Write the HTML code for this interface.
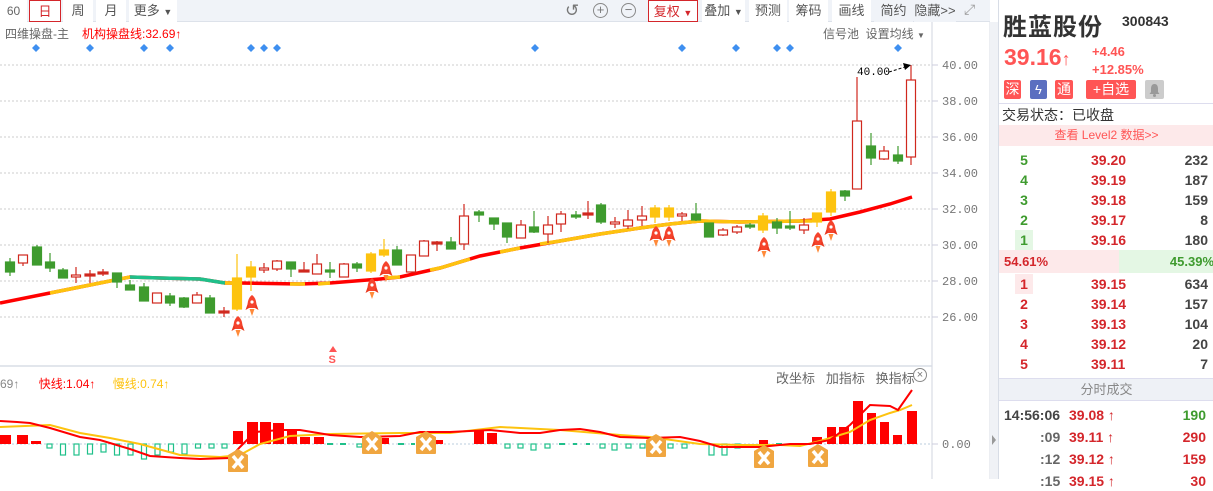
<!DOCTYPE html>
<html><head><meta charset="utf-8"><style>
*{margin:0;padding:0;box-sizing:border-box}
body{width:1213px;height:479px;overflow:hidden;background:#fff;font-family:"Liberation Sans","Noto Sans CJK SC",sans-serif;position:relative}
.a{position:absolute;white-space:nowrap}
.tb{position:absolute;left:0;top:0;width:990px;height:22px;background:#f0f3f8;border-bottom:1px solid #dde2ea}
.bt{position:absolute;top:0;height:22px;background:#fff;color:#555;font-size:13px;line-height:22px;text-align:center}
.rp{position:absolute;left:998px;top:0;width:215px;height:479px;border-left:1px solid #d8dde6}
.row{position:absolute;left:0;width:215px;height:20px;font-size:14px;font-weight:bold;line-height:20px}
.row .i{position:absolute;left:18px;width:14px;text-align:center}
.row .p{position:absolute;left:92px;color:#d4262b}
.row .v{position:absolute;right:6px;color:#444}
</style></head><body>
<div class="tb">
<div class="bt" style="left:0;width:27px;font-size:12px;color:#666">60</div>
<div class="bt" style="left:29px;width:32px;border:1px solid #d4262b;color:#d4262b">日</div>
<div class="bt" style="left:63px;width:30px">周</div>
<div class="bt" style="left:96px;width:30px">月</div>
<div class="bt" style="left:129px;width:48px">更多 <span style="font-size:9px">▼</span></div>
<div class="a" style="left:565px;top:0;font-size:17px;color:#777;line-height:22px">↺</div>
<div class="a" style="left:593px;top:3px;width:15px;height:15px;border:1.5px solid #888;border-radius:50%;font-size:13px;line-height:12px;text-align:center;color:#777">+</div>
<div class="a" style="left:621px;top:3px;width:15px;height:15px;border:1.5px solid #888;border-radius:50%;font-size:13px;line-height:11px;text-align:center;color:#777">−</div>
<div class="bt" style="left:648px;width:50px;border:1px solid #d4262b;color:#d4262b">复权 <span style="font-size:9px">▼</span></div>
<div class="bt" style="left:702px;width:43px">叠加 <span style="font-size:9px">▼</span></div>
<div class="bt" style="left:749px;width:38px">预测</div>
<div class="bt" style="left:789px;width:39px">筹码</div>
<div class="bt" style="left:832px;width:39px">画线</div>
<div class="bt" style="left:874px;width:39px;background:#f0f3f8">简约</div>
<div class="bt" style="left:914px;width:42px;background:#f0f3f8">隐藏&gt;&gt;</div>
<div class="a" style="left:964px;top:1px;font-size:14px;color:#999">⤢</div>
</div>
<div class="a" style="left:5px;top:25px;font-size:12px;color:#666">四维操盘-主</div>
<div class="a" style="left:82px;top:25px;font-size:12px;color:#f00">机构操盘线:32.69↑</div>
<div class="a" style="left:823px;top:25px;font-size:12px;color:#666">信号池&nbsp;&nbsp;设置均线 <span style="font-size:8px">▼</span></div>
<div class="a" style="left:0;top:375px;font-size:12px;color:#888">69↑ <span style="color:#f00;margin-left:16px">快线:1.04↑</span> <span style="color:#fdc30f;margin-left:14px">慢线:0.74↑</span></div>
<div class="a" style="left:776px;top:368px;font-size:13px;color:#666">改坐标&nbsp;&nbsp; 加指标&nbsp;&nbsp; 换指标</div>
<div class="a" style="left:913px;top:368px;width:14px;height:14px;border:1px solid #888;border-radius:50%;font-size:11px;line-height:12px;text-align:center;color:#777">×</div>
<svg class="a" style="left:0;top:0" width="998" height="479">
<defs>
<g id="rk"><path d="M0 0C4 3 5 8 4 13L-4 13C-5 8-4 3 0 0Z" fill="#f5432c"/><path d="M-4 8L-6.5 15L-3 13ZM4 8L6.5 15L3 13Z" fill="#e8371f"/><path d="M-2.5 14L0 21L2.5 14Z" fill="#ff8a3a"/><circle cx="0" cy="7" r="1.6" fill="#fff"/></g>
<g id="xb"><path d="M-10-6L0-12L10-6L10 10Q10 11 9 11L-9 11Q-10 11-10 10Z" fill="#f0a640"/><path d="M-5-5L5 7M5-5L-5 7" stroke="#fff" stroke-width="3.5"/></g>
</defs>
<line x1="990" y1="22" x2="990" y2="479" stroke="#d8dde6"/>
<rect x="990" y="22" width="8" height="457" fill="#f0f2f6"/>
<path d="M992 435L996 440L992 445Z" fill="#999"/>
<line x1="932" y1="22" x2="932" y2="479" stroke="#d0d6df"/>
<line x1="0" y1="366" x2="932" y2="366" stroke="#d8dde6" stroke-width="1.5"/>
<g stroke="#ccc" stroke-dasharray="2,2"><line x1="0" y1="65" x2="932" y2="65"/><line x1="0" y1="101" x2="932" y2="101"/><line x1="0" y1="137" x2="932" y2="137"/><line x1="0" y1="173" x2="932" y2="173"/><line x1="0" y1="209" x2="932" y2="209"/><line x1="0" y1="245" x2="932" y2="245"/><line x1="0" y1="281" x2="932" y2="281"/><line x1="0" y1="317" x2="932" y2="317"/><line x1="0" y1="444" x2="932" y2="444" stroke="#bcd"/></g>
<g stroke="#ccd" ><line x1="932" y1="65" x2="938" y2="65"/><line x1="932" y1="101" x2="938" y2="101"/><line x1="932" y1="137" x2="938" y2="137"/><line x1="932" y1="173" x2="938" y2="173"/><line x1="932" y1="209" x2="938" y2="209"/><line x1="932" y1="245" x2="938" y2="245"/><line x1="932" y1="281" x2="938" y2="281"/><line x1="932" y1="317" x2="938" y2="317"/><line x1="932" y1="444" x2="938" y2="444"/></g>
<g font-size="12" fill="#777" font-family="Liberation Mono,monospace"><text x="942" y="69">40.00</text><text x="942" y="105">38.00</text><text x="942" y="141">36.00</text><text x="942" y="177">34.00</text><text x="942" y="213">32.00</text><text x="942" y="249">30.00</text><text x="942" y="285">28.00</text><text x="942" y="321">26.00</text><text x="942" y="448">0.00</text></g>
<g fill="#3e8ff0"><path d="M36 44l4 4-4 4-4-4z"/><path d="M90 44l4 4-4 4-4-4z"/><path d="M144 44l4 4-4 4-4-4z"/><path d="M170 44l4 4-4 4-4-4z"/><path d="M251 44l4 4-4 4-4-4z"/><path d="M264 44l4 4-4 4-4-4z"/><path d="M277 44l4 4-4 4-4-4z"/><path d="M535 44l4 4-4 4-4-4z"/><path d="M682 44l4 4-4 4-4-4z"/><path d="M736 44l4 4-4 4-4-4z"/><path d="M777 44l4 4-4 4-4-4z"/><path d="M790 44l4 4-4 4-4-4z"/><path d="M898 44l4 4-4 4-4-4z"/></g>
<polyline fill="none" stroke="#f00" stroke-width="3.5" points="0,303 50,293 100,283 130,277 160,278 200,279 225,283 240,283 300,284 330,283 380,279 400,277 440,268 480,256 520,248 560,241 600,234 640,228 670,224 700,221 740,222 800,221 830,219 860,212 890,204 912,197"/>
<g fill="none" stroke-width="3.5"><polyline stroke="#fdc30f" points="50,293 100,283 130,277"/><polyline stroke="#1fc08a" points="130,277 160,278 200,279 225,283"/><polyline stroke="#fdc30f" points="225,283 240,283"/><polyline stroke="#fdc30f" points="290,284 305,284"/><polyline stroke="#fdc30f" points="318,284 330,283"/><polyline stroke="#fdc30f" points="385,278 400,277"/><polyline stroke="#fdc30f" points="430,270 440,268 470,259"/><polyline stroke="#fdc30f" points="500,252 520,248"/><polyline stroke="#fdc30f" points="540,244 560,241 600,234 640,228 670,224 700,221 740,222 800,221 812,221"/></g>
<g stroke-width="1.2">
<g stroke="#3e9b2e" fill="#3e9b2e">
<line x1="10" y1="258" x2="10" y2="276"/><rect x="5.5" y="262" width="9" height="10"/>
<line x1="37" y1="245" x2="37" y2="265"/><rect x="32.5" y="247" width="9" height="18"/>
<line x1="50" y1="253" x2="50" y2="272"/><rect x="45.5" y="262" width="9" height="6"/>
<line x1="63" y1="268" x2="63" y2="278"/><rect x="58.5" y="270" width="9" height="8"/>
<line x1="117" y1="273" x2="117" y2="288"/><rect x="112.5" y="273" width="9" height="9"/>
<line x1="130" y1="280" x2="130" y2="290"/><rect x="125.5" y="285" width="9" height="5"/>
<line x1="144" y1="283" x2="144" y2="301"/><rect x="139.5" y="287" width="9" height="14"/>
<line x1="170" y1="293" x2="170" y2="306"/><rect x="165.5" y="296" width="9" height="7"/>
<line x1="184" y1="297" x2="184" y2="308"/><rect x="179.5" y="298" width="9" height="9"/>
<line x1="210" y1="295" x2="210" y2="313"/><rect x="205.5" y="298" width="9" height="15"/>
<line x1="291" y1="262" x2="291" y2="277"/><rect x="286.5" y="262" width="9" height="7"/>
<line x1="330" y1="262" x2="330" y2="278"/><rect x="325.5" y="270" width="9" height="2"/>
<line x1="357" y1="262" x2="357" y2="272"/><rect x="352.5" y="264" width="9" height="4"/>
<line x1="397" y1="246" x2="397" y2="265"/><rect x="392.5" y="250" width="9" height="15"/>
<line x1="451" y1="237" x2="451" y2="249"/><rect x="446.5" y="242" width="9" height="7"/>
<line x1="479" y1="210" x2="479" y2="222"/><rect x="474.5" y="212" width="9" height="3"/>
<line x1="494" y1="218" x2="494" y2="230"/><rect x="489.5" y="218" width="9" height="6"/>
<line x1="507" y1="223" x2="507" y2="243"/><rect x="502.5" y="223" width="9" height="14"/>
<line x1="534" y1="211" x2="534" y2="233"/><rect x="529.5" y="227" width="9" height="5"/>
<line x1="576" y1="211" x2="576" y2="219"/><rect x="571.5" y="215" width="9" height="2"/>
<line x1="601" y1="203" x2="601" y2="224"/><rect x="596.5" y="205" width="9" height="17"/>
<line x1="696" y1="203" x2="696" y2="221"/><rect x="691.5" y="214" width="9" height="6"/>
<line x1="709" y1="223" x2="709" y2="237"/><rect x="704.5" y="223" width="9" height="14"/>
<line x1="750" y1="223" x2="750" y2="229"/><rect x="745.5" y="225" width="9" height="2"/>
<line x1="777" y1="218" x2="777" y2="234"/><rect x="772.5" y="222" width="9" height="6"/>
<line x1="790" y1="211" x2="790" y2="230"/><rect x="785.5" y="226" width="9" height="2"/>
<line x1="845" y1="190" x2="845" y2="201"/><rect x="840.5" y="191" width="9" height="5"/>
<line x1="871" y1="133" x2="871" y2="165"/><rect x="866.5" y="146" width="9" height="12"/>
<line x1="898" y1="146" x2="898" y2="164"/><rect x="893.5" y="155" width="9" height="6"/>
</g>
<g stroke="#fdc30f" fill="#fdc30f">
<line x1="237" y1="254" x2="237" y2="311"/><rect x="232.5" y="278" width="9" height="31"/>
<line x1="251" y1="261" x2="251" y2="291"/><rect x="246.5" y="267" width="9" height="10"/>
<line x1="371" y1="252" x2="371" y2="273"/><rect x="366.5" y="254" width="9" height="17"/>
<line x1="384" y1="239" x2="384" y2="257"/><rect x="379.5" y="250" width="9" height="5"/>
<line x1="655" y1="205" x2="655" y2="223"/><rect x="650.5" y="208" width="9" height="9"/>
<line x1="669" y1="205" x2="669" y2="221"/><rect x="664.5" y="208" width="9" height="9"/>
<line x1="763" y1="213" x2="763" y2="233"/><rect x="758.5" y="216" width="9" height="14"/>
<line x1="817" y1="213" x2="817" y2="227"/><rect x="812.5" y="213" width="9" height="9"/>
<line x1="831" y1="189" x2="831" y2="216"/><rect x="826.5" y="192" width="9" height="20"/>
</g>
<g stroke="#d0281e" fill="#fff">
<line x1="23" y1="255" x2="23" y2="266"/><rect x="18.5" y="255" width="9" height="8"/>
<line x1="76" y1="267" x2="76" y2="283"/><rect x="71.5" y="275" width="9" height="2"/>
<line x1="157" y1="293" x2="157" y2="303"/><rect x="152.5" y="293" width="9" height="10"/>
<line x1="197" y1="292" x2="197" y2="303"/><rect x="192.5" y="295" width="9" height="8"/>
<line x1="264" y1="263" x2="264" y2="273"/><rect x="259.5" y="268" width="9" height="2"/>
<line x1="277" y1="260" x2="277" y2="271"/><rect x="272.5" y="261" width="9" height="8"/>
<line x1="317" y1="254" x2="317" y2="274"/><rect x="312.5" y="264" width="9" height="10"/>
<line x1="344" y1="263" x2="344" y2="277"/><rect x="339.5" y="264" width="9" height="13"/>
<line x1="411" y1="255" x2="411" y2="272"/><rect x="406.5" y="255" width="9" height="17"/>
<line x1="424" y1="240" x2="424" y2="256"/><rect x="419.5" y="241" width="9" height="15"/>
<line x1="464" y1="204" x2="464" y2="250"/><rect x="459.5" y="216" width="9" height="28"/>
<line x1="521" y1="220" x2="521" y2="238"/><rect x="516.5" y="225" width="9" height="13"/>
<line x1="548" y1="216" x2="548" y2="243"/><rect x="543.5" y="225" width="9" height="9"/>
<line x1="561" y1="211" x2="561" y2="232"/><rect x="556.5" y="214" width="9" height="10"/>
<line x1="615" y1="217" x2="615" y2="228"/><rect x="610.5" y="222" width="9" height="2"/>
<line x1="628" y1="210" x2="628" y2="229"/><rect x="623.5" y="220" width="9" height="6"/>
<line x1="642" y1="206" x2="642" y2="226"/><rect x="637.5" y="216" width="9" height="4"/>
<line x1="682" y1="212" x2="682" y2="221"/><rect x="677.5" y="214" width="9" height="2"/>
<line x1="723" y1="228" x2="723" y2="236"/><rect x="718.5" y="230" width="9" height="5"/>
<line x1="737" y1="225" x2="737" y2="234"/><rect x="732.5" y="227" width="9" height="5"/>
<line x1="804" y1="218" x2="804" y2="234"/><rect x="799.5" y="225" width="9" height="5"/>
<line x1="857" y1="77" x2="857" y2="189"/><rect x="852.5" y="121" width="9" height="68"/>
<line x1="884" y1="146" x2="884" y2="160"/><rect x="879.5" y="151" width="9" height="8"/>
<line x1="911" y1="65" x2="911" y2="165"/><rect x="906.5" y="80" width="9" height="77"/>
</g>
<g stroke="#d0281e" fill="#d0281e">
<line x1="90" y1="270" x2="90" y2="283"/><rect x="85" y="274" width="10" height="2"/>
<line x1="103" y1="269" x2="103" y2="276"/><rect x="98" y="272" width="10" height="2"/>
<line x1="224" y1="307" x2="224" y2="317"/><rect x="219" y="311" width="10" height="2"/>
<line x1="304" y1="262" x2="304" y2="272"/><rect x="299" y="270" width="10" height="2"/>
<line x1="437" y1="241" x2="437" y2="251"/><rect x="432" y="242" width="10" height="2"/>
<line x1="588" y1="201" x2="588" y2="219"/><rect x="583" y="213" width="10" height="2"/>
</g>
</g>
<text x="857" y="75" font-size="11" font-family="Liberation Mono,monospace" fill="#000">40.00</text>
<path d="M889 72L908 66" stroke="#000" stroke-dasharray="3,2"/><path d="M903 63L911 65L905 70Z" fill="#000"/>
<g><use href="#rk" x="238" y="316"/><use href="#rk" x="252" y="295"/><use href="#rk" x="372" y="278"/><use href="#rk" x="386" y="261"/><use href="#rk" x="656" y="226"/><use href="#rk" x="669" y="226"/><use href="#rk" x="764" y="237"/><use href="#rk" x="818" y="232"/><use href="#rk" x="831" y="220"/></g>
<path d="M333 346L337 352L329 352Z" fill="#f55"/><text x="328.5" y="363" font-size="11" font-weight="bold" fill="#f55">S</text>
<g fill="#f00">
<rect x="0" y="435" width="11" height="9"/><rect x="17" y="435" width="11" height="9"/><rect x="31" y="441" width="10" height="3"/>
<rect x="233" y="431" width="10" height="13"/><rect x="247" y="422" width="11" height="22"/><rect x="260" y="422" width="11" height="22"/><rect x="273" y="423" width="11" height="21"/><rect x="287" y="429" width="10" height="15"/><rect x="300" y="437" width="10" height="7"/><rect x="314" y="437" width="10" height="7"/>
<rect x="367" y="440" width="10" height="4"/><rect x="380" y="438" width="9" height="6"/><rect x="420" y="438" width="10" height="6"/><rect x="433" y="440" width="10" height="4"/>
<rect x="474" y="431" width="10" height="13"/><rect x="487" y="433" width="10" height="11"/>
<rect x="651" y="440" width="10" height="4"/>
<rect x="759" y="440" width="9" height="4"/><rect x="812" y="437" width="10" height="7"/><rect x="827" y="427" width="9" height="17"/><rect x="839" y="427" width="10" height="17"/><rect x="853" y="401" width="10" height="43"/><rect x="867" y="413" width="9" height="31"/><rect x="880" y="422" width="9" height="22"/><rect x="893" y="435" width="9" height="9"/><rect x="907" y="411" width="10" height="33"/>
</g>
<g fill="none" stroke="#1fc08a" stroke-width="1.2">
<rect x="47" y="444" width="5" height="4"/><rect x="60.5" y="444" width="5" height="11"/><rect x="74" y="444" width="5" height="11"/><rect x="87.5" y="444" width="5" height="10"/><rect x="101" y="444" width="5" height="8"/><rect x="114.5" y="444" width="5" height="11"/><rect x="128" y="444" width="5" height="11"/><rect x="141.5" y="444" width="5" height="15"/><rect x="155" y="444" width="5" height="11"/><rect x="168.5" y="444" width="5" height="8"/><rect x="182" y="444" width="5" height="10"/><rect x="195.5" y="444" width="5" height="4"/><rect x="209" y="444" width="5" height="4"/><rect x="222" y="444" width="5" height="4"/>
<rect x="357" y="444" width="5" height="3"/><rect x="505" y="444" width="5" height="4"/><rect x="518" y="444" width="5" height="4"/><rect x="531" y="444" width="5" height="6"/><rect x="545" y="444" width="5" height="4"/><rect x="600" y="444" width="5" height="4"/><rect x="612" y="444" width="5" height="6"/><rect x="626" y="444" width="5" height="4"/><rect x="640" y="444" width="5" height="4"/><rect x="668" y="444" width="5" height="4"/><rect x="682" y="444" width="5" height="4"/><rect x="709" y="444" width="5" height="11"/><rect x="722" y="444" width="5" height="11"/><rect x="735" y="444" width="5" height="4"/>
</g>
<g stroke="#1fc08a" stroke-width="2"><line x1="327" y1="444" x2="333" y2="444"/><line x1="340" y1="444" x2="346" y2="444"/><line x1="398" y1="444" x2="404" y2="444"/><line x1="411" y1="444" x2="415" y2="444"/><line x1="559" y1="444" x2="565" y2="444"/><line x1="573" y1="444" x2="577" y2="444"/><line x1="586" y1="444" x2="590" y2="444"/><line x1="776" y1="444" x2="782" y2="444"/><line x1="790" y1="444" x2="796" y2="444"/><line x1="802" y1="444" x2="808" y2="444"/></g>
<polyline fill="none" stroke="#fdc30f" stroke-width="2" points="0,427 50,425 80,433 110,438 140,444 180,455 220,457 240,455 260,444 290,436 330,434 400,433 450,433 500,427 560,430 620,435 650,437 700,444 740,445 780,445 800,446 820,441 850,432 870,420 890,413 900,410 912,405"/>
<polyline fill="none" stroke="#f00" stroke-width="2" points="0,421 17,422 30,423 50,428 80,437 100,440 130,449 150,456 180,458 200,459 230,458 240,447 255,432 280,430 300,430 330,435 360,437 400,436 420,432 450,432 490,430 520,433 540,433 560,430 580,429 600,432 620,437 650,438 680,437 700,441 720,447 740,447 760,447 790,444 810,444 830,440 850,425 870,405 890,406 898,410 912,390"/>
<g><use href="#xb" x="238" y="461"/><use href="#xb" x="372" y="443"/><use href="#xb" x="426" y="443"/><use href="#xb" x="656" y="446"/><use href="#xb" x="764" y="457"/><use href="#xb" x="818" y="456"/></g>
</svg>
<div class="rp">
<div class="a" style="left:4px;top:7px;font-size:24px;font-weight:bold;color:#333;letter-spacing:1px">胜蓝股份</div>
<div class="a" style="left:123px;top:13px;font-size:14px;font-weight:bold;color:#333">300843</div>
<div class="a" style="left:5px;top:44px;font-size:23px;font-weight:bold;color:#f55">39.16<span style="font-size:18px">↑</span></div>
<div class="a" style="left:93px;top:43px;font-size:13px;font-weight:bold;color:#f55;line-height:18px">+4.46<br>+12.85%</div>
<div class="a" style="left:5px;top:80px;width:17px;height:19px;background:#f55;color:#fff;font-size:14px;text-align:center;line-height:19px;border-radius:2px">深</div>
<div class="a" style="left:31px;top:80px;width:17px;height:19px;background:#5b6fc0;color:#fff;font-size:13px;text-align:center;line-height:19px;border-radius:2px">ϟ</div>
<div class="a" style="left:56px;top:80px;width:18px;height:19px;background:#f55;color:#fff;font-size:14px;text-align:center;line-height:19px;border-radius:2px">通</div>
<div class="a" style="left:87px;top:80px;width:50px;height:19px;background:#f55;color:#fff;font-size:14px;text-align:center;line-height:19px;border-radius:2px">+自选</div>
<div class="a" style="left:146px;top:80px;width:19px;height:19px;background:#ccc;border-radius:2px"><svg width="19" height="19"><path d="M9.5 4C6.5 4 6 7 6 9L6 12L4.5 14L14.5 14L13 12L13 9C13 7 12.5 4 9.5 4Z" fill="#999"/><circle cx="9.5" cy="15.5" r="1.5" fill="#999"/></svg></div>
<div class="a" style="left:0;top:103px;width:215px;border-top:1px solid #dde"></div>
<div class="a" style="left:3px;top:105px;font-size:14px;color:#333">交易状态：已收盘</div>
<div class="a" style="left:0;top:125px;width:215px;height:21px;background:#fde9ea;color:#f55;font-size:12px;text-align:center;line-height:21px">查看 Level2 数据&gt;&gt;</div>
<div class="row" style="top:150px"><span class="i" style="color:#3e9b2e">5</span><span class="p">39.20</span><span class="v">232</span></div>
<div class="row" style="top:170px"><span class="i" style="color:#3e9b2e">4</span><span class="p">39.19</span><span class="v">187</span></div>
<div class="row" style="top:190px"><span class="i" style="color:#3e9b2e">3</span><span class="p">39.18</span><span class="v">159</span></div>
<div class="row" style="top:210px"><span class="i" style="color:#3e9b2e">2</span><span class="p">39.17</span><span class="v">8</span></div>
<div class="row" style="top:230px"><span class="i" style="color:#3e9b2e;background:#e4f7e4;width:18px;left:16px">1</span><span class="p">39.16</span><span class="v">180</span></div>
<div class="a" style="left:0;top:250px;width:120px;height:23px;background:#fde9ea;color:#d4262b;font-size:13px;font-weight:bold;line-height:23px;padding-left:5px">54.61%</div>
<div class="a" style="left:120px;top:250px;width:95px;height:23px;background:#e4f7e4;color:#3e9b2e;font-size:13px;font-weight:bold;line-height:23px;text-align:right">45.39%</div>
<div class="row" style="top:274px"><span class="i" style="color:#d4262b;background:#fde9ea;width:18px;left:16px">1</span><span class="p">39.15</span><span class="v">634</span></div>
<div class="row" style="top:294px"><span class="i" style="color:#d4262b">2</span><span class="p">39.14</span><span class="v">157</span></div>
<div class="row" style="top:314px"><span class="i" style="color:#d4262b">3</span><span class="p">39.13</span><span class="v">104</span></div>
<div class="row" style="top:334px"><span class="i" style="color:#d4262b">4</span><span class="p">39.12</span><span class="v">20</span></div>
<div class="row" style="top:354px"><span class="i" style="color:#d4262b">5</span><span class="p">39.11</span><span class="v">7</span></div>
<div class="a" style="left:0;top:378px;width:215px;height:23px;background:#eef1f6;border-top:1px solid #dde;border-bottom:1px solid #dde;color:#888;font-size:13px;text-align:center;line-height:21px">分时成交</div>
<div class="row" style="top:405px"><span style="position:absolute;left:5px;color:#444">14:56:06</span><span style="position:absolute;left:70px;color:#d4262b">39.08 ↑</span><span class="v" style="color:#3e9b2e;right:8px">190</span></div>
<div class="row" style="top:427px"><span style="position:absolute;left:41px;color:#666">:09</span><span style="position:absolute;left:70px;color:#d4262b">39.11 ↑</span><span class="v" style="color:#d4262b;right:8px">290</span></div>
<div class="row" style="top:449px"><span style="position:absolute;left:41px;color:#666">:12</span><span style="position:absolute;left:70px;color:#d4262b">39.12 ↑</span><span class="v" style="color:#d4262b;right:8px">159</span></div>
<div class="row" style="top:471px"><span style="position:absolute;left:41px;color:#666">:15</span><span style="position:absolute;left:70px;color:#d4262b">39.15 ↑</span><span class="v" style="color:#d4262b;right:8px">30</span></div>
</div>
</body></html>
